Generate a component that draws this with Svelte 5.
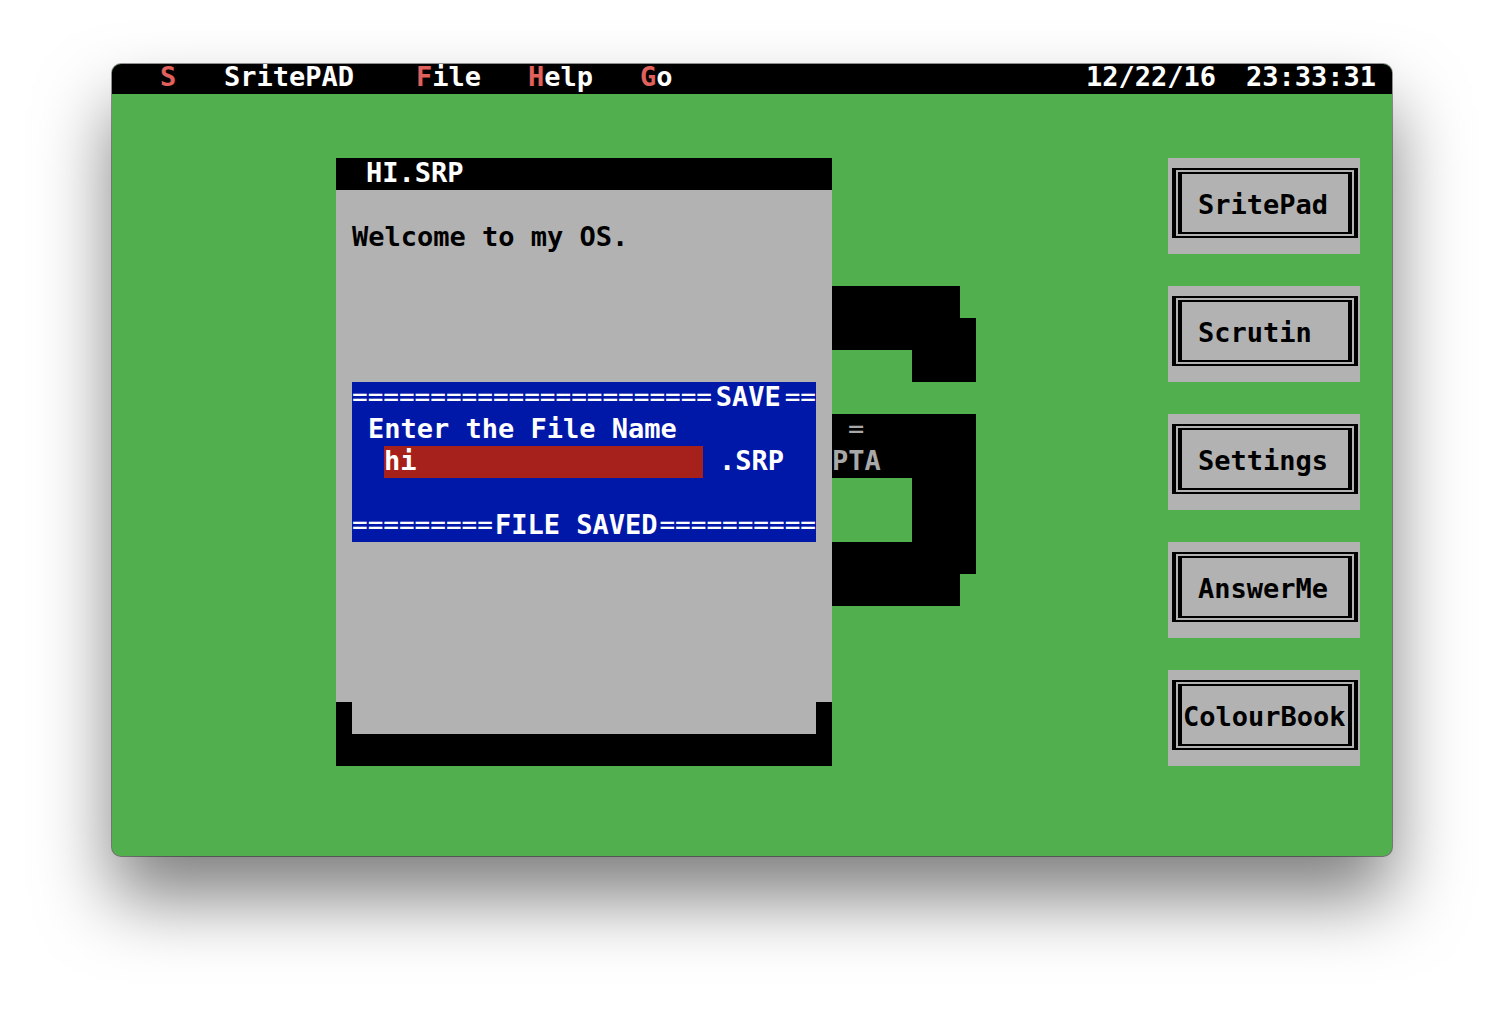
<script>
  const menus = ['File', 'Help', 'Go'];
  const apps = ['SritePad', 'Scrutin', 'Settings', 'AnswerMe', 'ColourBook'];
  let name = $state('hi');
</script>

<div class="screen">
  <header>
    <nav>
      <button class="system">S</button>
      <button class="program">SritePAD</button>
      {#each menus as menu}
        <button class="menu"><span class="key">{menu[0]}</span>{menu.slice(1)}</button>
      {/each}
    </nav>
    <div class="clock"><span>12/22/16</span><time>23:33:31</time></div>
  </header>

  <main>
    <div class="logo">
      <svg viewBox="0 0 224 320" aria-hidden="true">
        <path d="M0 0H208V32H224V96H160V64H0ZM0 128H224V288H208V320H0V256H160V192H0Z" />
      </svg>
      <div class="credit"><span class="mark">=</span><span>PTA</span></div>
    </div>

    <section class="window">
      <h1>HI.SRP</h1>
      <div class="page">
        <p>Welcome to my OS.</p>
        <form onsubmit={(e) => e.preventDefault()}>
          <div class="rule">
            <span class="fill">{'='.repeat(23)}</span><span>SAVE</span><span class="fill">==</span>
          </div>
          <label for="filename">Enter the File Name</label>
          <div class="field">
            <input id="filename" type="text" bind:value={name} />
            <span>.SRP</span>
          </div>
          <div class="rule last">
            <span class="fill">{'='.repeat(9)}</span><span>FILE SAVED</span><span class="fill">{'='.repeat(10)}</span>
          </div>
        </form>
      </div>
      <div class="foot"><div></div></div>
    </section>

    <aside>
      {#each apps as app}
        <button class="app" class:wide={app.length > 8}>
          <span class="outer"><span class="inner">{app}</span></span>
        </button>
      {/each}
    </aside>
  </main>
</div>

<style>
  :global(body) {
    background: #fff;
  }
  :global(#app) {
    padding: 64px 112px 160px;
  }
  .screen,
  button,
  input {
    font: bold 27px/30px 'DejaVu Sans Mono', monospace;
  }
  .screen {
    border-radius: 9px;
    background: #52af4e;
    box-shadow:
      0 0 0 1px rgba(0, 0, 0, 0.4),
      0 42px 72px rgba(0, 0, 0, 0.5);
  }
  button {
    border: 0;
    padding: 0;
    background: none;
    color: inherit;
    text-align: left;
    white-space: nowrap;
  }
  header {
    display: flex;
    justify-content: space-between;
    border-radius: 9px 9px 0 0;
    background: #000;
    color: #fff;
    padding: 0 16px 4px 48px;
  }
  nav,
  .clock {
    display: flex;
    line-height: 26px;
  }
  nav button {
    line-height: 26px;
  }
  .clock {
    gap: 30px;
  }
  .system {
    width: 64px;
  }
  .program {
    width: 192px;
  }
  .menu {
    width: 112px;
  }
  .system,
  .key {
    color: #e0605c;
  }
  main {
    position: relative;
    display: grid;
    grid-template-columns: 14fr minmax(0, 31fr) 21fr minmax(0, 12fr) 2fr;
    padding: 64px 0 90px;
  }
  .logo {
    position: absolute;
    left: 50%;
    top: 192px;
    width: 224px;
  }
  .logo svg {
    display: block;
  }
  .credit {
    position: absolute;
    left: 80px;
    top: 128px;
    display: grid;
    grid-auto-rows: 32px;
    color: #a8a8a8;
  }
  .mark {
    padding-left: 16px;
    font-weight: normal;
  }
  .window {
    grid-column: 2;
    position: relative;
    display: flex;
    flex-direction: column;
    background: #b2b2b2;
  }
  h1 {
    margin: 0;
    padding: 0 30px 2px;
    font: inherit;
    background: #000;
    color: #fff;
  }
  .page {
    flex: 1;
    padding: 32px 16px;
  }
  p {
    margin: 0 0 130px;
  }
  form {
    background: #0018a8;
    color: #fff;
  }
  .rule {
    display: flex;
    justify-content: space-between;
    height: 32px;
    white-space: nowrap;
  }
  .last {
    margin-top: 32px;
  }
  .fill {
    font-size: 26px;
    font-weight: normal;
  }
  label {
    display: block;
    padding: 0 16px 2px;
  }
  .field {
    display: flex;
    gap: 16px;
    height: 32px;
    padding: 0 32px;
  }
  input {
    flex: 1;
    min-width: 0;
    border: 0;
    border-radius: 0;
    padding: 0 0 2px;
    background: #a7211c;
    color: #fff;
    outline: 0;
  }
  .foot {
    background: #000;
    padding: 0 16px 32px;
  }
  .foot div {
    height: 32px;
    background: #b2b2b2;
  }
  aside {
    grid-column: 4;
    display: flex;
    flex-direction: column;
    gap: 32px;
  }
  .app {
    padding: 10px 2px 16px 4px;
    background: #b2b2b2;
    color: #000;
  }
  .outer,
  .inner {
    display: block;
    border: solid #000;
    border-width: 2px 4px;
  }
  .outer {
    padding: 2px;
  }
  .inner {
    padding: 16px 0 12px 16px;
  }
  .wide .inner {
    padding-left: 1px;
  }
</style>
